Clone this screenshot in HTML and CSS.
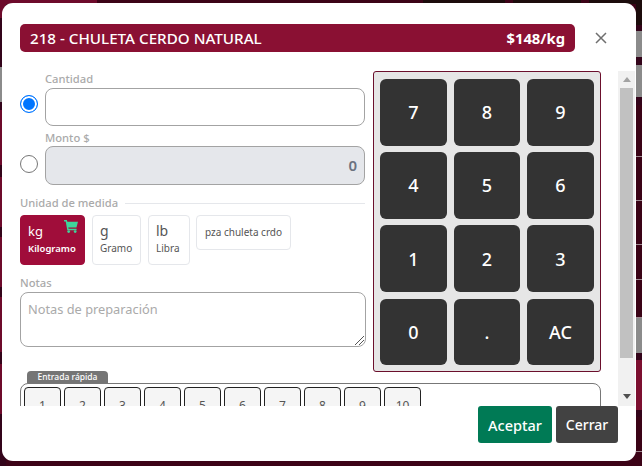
FILE: index.html
```html
<!DOCTYPE html>
<html lang="es">
<head>
<meta charset="utf-8">
<title>Producto</title>
<link rel="stylesheet" href="styles.css">
</head>
<body>
<div class="backdrop">
  <div class="strip">
    <i class="s-maroon h18"></i><i class="s-dark h49"></i><i class="s-gray h35"></i><i class="s-dark h8"></i>
    <i class="s-maroon h55"></i><i class="s-dark h12"></i><i class="s-maroon h50"></i><i class="s-dark h10"></i>
    <i class="s-maroon h50"></i><i class="s-dark h10"></i><i class="s-maroon h55"></i><i class="s-dark h12"></i>
    <i class="s-maroon h50"></i><i class="s-dark h52"></i>
  </div>
  <div class="topbar">
    <i class="t-tab"></i><i class="t-gap"></i><i class="t-box b1"></i><i class="t-box b2"></i><i class="t-box b3"></i>
  </div>
  <div class="strip">
    <i class="s-black h25"></i><i class="s-dark h6"></i><i class="s-gray h26"></i><i class="s-dark h8"></i>
    <i class="s-gray h32"></i><i class="s-dark h8"></i><i class="s-row h52"></i><i class="s-row h44"></i>
    <i class="s-row h44"></i><i class="s-row h35"></i><i class="s-row h38"></i><i class="s-gray h35"></i>
    <i class="s-dark h7"></i><i class="s-red h50"></i><i class="s-dark h7"></i><i class="s-row h35"></i>
  </div>
</div>
<div class="modal">
  <header class="head">
    <div class="title"><span>218 - CHULETA CERDO NATURAL</span><b>$148/kg</b></div>
    <button class="close" aria-label="Cerrar">
      <svg width="12" height="12" viewBox="0 0 12 12"><path d="M1 1l10 10M11 1L1 11" stroke="#6f6f6f" stroke-width="1.500" fill="none"/></svg>
    </button>
  </header>
  <div class="body">
    <div class="content">
      <div class="columns">
        <div class="form">
          <div class="amount">
            <span class="radio on"></span>
            <div class="field">
              <label class="lbl">Cantidad</label>
              <div class="input"></div>
            </div>
          </div>
          <div class="amount second">
            <span class="radio"></span>
            <div class="field">
              <label class="lbl">Monto $</label>
              <div class="input off">0</div>
            </div>
          </div>
          <div class="divider"><span class="lbl">Unidad de medida</span><hr></div>
          <div class="units">
            <button class="unit active kg">
              <svg class="cart" width="14" height="13" viewBox="0 0 15 14"><path d="M0 0h3l.6 2H15l-1.600 6H4.600l.3 1.500H13.500V11H3.500L1.800 1.500H0z" fill="#3fd69b"/><circle cx="5" cy="12.500" r="1.500" fill="#3fd69b"/><circle cx="12" cy="12.500" r="1.500" fill="#3fd69b"/></svg>
              <span class="sym">kg</span><span class="name">Kilogramo</span>
            </button>
            <button class="unit g"><span class="sym">g</span><span class="name">Gramo</span></button>
            <button class="unit lb"><span class="sym">lb</span><span class="name">Libra</span></button>
            <button class="unit pza"><span class="name">pza chuleta crdo</span></button>
          </div>
          <label class="lbl notes-lbl">Notas</label>
          <div class="notes">Notas de preparación
            <svg class="grip" width="9" height="9" viewBox="0 0 9 9"><path d="M0 9l9-9M4 9l5-5" stroke="#555" stroke-width="1" fill="none"/></svg>
          </div>
        </div>
        <div class="pad">
          <button>7</button><button>8</button><button>9</button>
          <button>4</button><button>5</button><button>6</button>
          <button>1</button><button>2</button><button>3</button>
          <button>0</button><button>.</button><button>AC</button>
        </div>
      </div>
      <div class="quick">
        <div class="tab">Entrada rápida</div>
        <div class="quick-box">
          <button>1</button><button>2</button><button>3</button><button>4</button><button>5</button>
          <button>6</button><button>7</button><button>8</button><button>9</button><button>10</button>
        </div>
      </div>
    </div>
    <div class="scrollbar">
      <span class="arrow up"></span>
      <span class="thumb"></span>
      <span class="arrow down"></span>
    </div>
  </div>
  <footer class="foot">
    <button class="btn ok">Aceptar</button>
    <button class="btn no">Cerrar</button>
  </footer>
</div>
</body>
</html>
```
FILE: styles.css
```css
* { box-sizing: border-box; }
html, body { margin: 0; height: 100%; overflow: hidden; }
body { font-family: "Noto Sans", "Liberation Sans", sans-serif; background: #3c0317; }
button { font-family: inherit; padding: 0; cursor: pointer; }

.backdrop { display: grid; grid-template-columns: 6px 1fr 6px; height: 466px; }
.strip { display: flex; flex-direction: column; }
.strip i { display: block; flex: none; }
.topbar { display: flex; height: 4px; }
.topbar i { display: block; flex: none; }
.t-tab { width: 91px; background: #6d0a2b; }
.t-gap { width: 326px; }
.t-box { background: #1c0c0c; }
.b1 { width: 82px; margin-right: 8px; }
.b2 { width: 68px; margin-right: 8px; }
.b3 { width: 47px; }
.s-maroon { background: #6d0a2b; }
.s-dark { background: #33041a; }
.s-black { background: #1c0c0c; }
.s-gray { background: #8b8b8b; }
.s-red { background: #7c0f30; }
.s-row { background: #3a0316; border-bottom: 1px solid #a08a92; }
.h6 { height: 6px; } .h7 { height: 7px; } .h8 { height: 8px; } .h10 { height: 10px; } .h12 { height: 12px; }
.h18 { height: 18px; } .h25 { height: 25px; } .h26 { height: 26px; } .h32 { height: 32px; } .h35 { height: 35px; }
.h38 { height: 38px; } .h44 { height: 44px; } .h49 { height: 49px; } .h50 { height: 50px; } .h52 { height: 52px; } .h55 { height: 55px; }

.modal {
  position: absolute; left: 2px; top: 3px; width: 634px; height: 458px;
  background: #fff; border-radius: 11px;
  display: flex; flex-direction: column;
}

.head { display: flex; align-items: center; padding: 21px 0 0 18px; height: 68px; flex: none; align-self: stretch; }
.title {
  width: 555px; height: 28px; background: #8a1033; border-radius: 5px;
  color: #fff; display: flex; justify-content: space-between; align-items: center;
  padding: 0 10px; font-size: 15.200px; font-weight: 500; margin-bottom: 19px;
}
.title b { font-weight: 700; font-size: 14.800px; }
.close { border: 0; background: none; width: 12px; height: 12px; margin: 0 0 19px 20px; display: flex; }

.body { flex: none; height: 335px; display: flex; }
.content { width: 616px; flex: none; overflow: hidden; padding-left: 18px; }
.scrollbar { width: 17px; flex: none; background: #f1f1f1; display: flex; flex-direction: column; align-items: center; }
.arrow { flex: none; width: 0; height: 0; border-left: 4.500px solid transparent; border-right: 4.500px solid transparent; }
.arrow.up { border-bottom: 5px solid #a3a3a3; margin: 6px 0 6px; }
.arrow.down { border-top: 5px solid #505050; margin: 36px 0 0; }
.thumb { width: 13px; height: 270px; flex: none; background: #c1c1c1; }

.columns { display: flex; gap: 7px; }
.form { width: 346px; flex: none; }
.lbl { font-size: 11.200px; line-height: 16px; font-weight: 500; color: #aaa; display: block; }

.amount { display: flex; align-items: flex-end; gap: 7px; width: 345px; }
.amount.second { margin-top: 3px; }
.field { flex: 1; }
.field .lbl { height: 17px; }
.second .field .lbl { line-height: 18px; }
.radio {
  width: 18px; height: 18px; border-radius: 50%; border: 1px solid #767676; background: #fff;
  flex: none; margin-bottom: 13px;
}
.radio.on { border-color: #0075ff; box-shadow: inset 0 0 0 2px #fff; background: #0075ff; }
.second .radio { margin-bottom: 12px; }
.input { height: 38px; border: 1px solid #a3a3a3; border-radius: 8px; background: #fff; }
.input.off {
  height: 39px; background: #e5e7eb; color: #6b7280; font-size: 15px; font-weight: 600;
  text-align: right; line-height: 37px; padding-right: 7px;
}

.divider { display: flex; align-items: center; gap: 7px; margin-top: 10px; width: 345px; }
.divider hr { flex: 1; border: 0; border-top: 1px solid #e5e7eb; margin: 0; }

.units { display: flex; align-items: flex-start; gap: 7px; margin-top: 4px; }
.unit {
  position: relative; height: 50px; background: #fff; border: 1px solid #e5e7eb; border-radius: 4px;
  color: #555; display: flex; flex-direction: column; align-items: flex-start; justify-content: center;
  padding: 0 6px 3px 7px;
}
.unit .sym { font-size: 14px; line-height: 20px; }
.unit .name { font-size: 10px; line-height: 15px; }
.unit.kg { width: 65px; background: #a00d3a; border-color: #a00d3a; color: #fff; }
.unit.kg .sym { font-size: 13px; }
.unit.kg .name { font-weight: 600; font-size: 9.500px; }
.unit.g { width: 49px; }
.unit.lb { width: 42px; }
.unit.pza { width: 95px; height: 35px; align-items: center; margin-left: -1px; padding: 0; }
.cart { position: absolute; right: 6px; top: 4px; }

.notes-lbl { margin-top: 10px; height: 17px; }
.notes {
  position: relative; height: 55px; border: 1px solid #a3a3a3; border-radius: 8px;
  padding: 7px 7px; font-size: 12.800px; line-height: 18px; color: #aaa;
}
.grip { position: absolute; right: 1px; bottom: 1px; }

.pad {
  width: 228px; height: 301px; background: #e6e6e6; border: 1px solid #6b0f2c; border-radius: 3px;
  display: grid; grid-template-columns: 67px 66px 67px; grid-auto-rows: 66.500px; gap: 6.700px 7px;
  padding: 7px 6px 6px; flex: none;
}
.pad button {
  background: #333; border: 0; border-radius: 6px; color: #fff; font-size: 18px; font-weight: 500;
}

.quick { height: 40px; margin-top: -1px; }
.tab {
  margin-left: 7px; width: 81px; height: 12px; background: #757575; border-radius: 4px 4px 0 0;
  color: #fff; font-size: 8.500px; font-weight: 500; line-height: 12px; text-align: center;
}
.quick-box {
  border: 1px solid #777; border-radius: 8px; width: 581px; height: 60px;
  padding: 3px; display: flex; gap: 3px;
}
.quick-box button {
  width: 37px; height: 36px; flex: none; background: #f5f5f5; border: 1px solid #222; border-radius: 4px;
  color: #555; font-size: 12px;
}

.foot { display: flex; justify-content: flex-end; gap: 4px; padding-right: 18px; flex: none; }
.btn { height: 37px; border: 0; border-radius: 3px; color: #fff; font-size: 14.500px; font-weight: 500; }
.ok { width: 74px; background: #007a55; }
.no { width: 62px; background: #424242; font-size: 14px; }
```
